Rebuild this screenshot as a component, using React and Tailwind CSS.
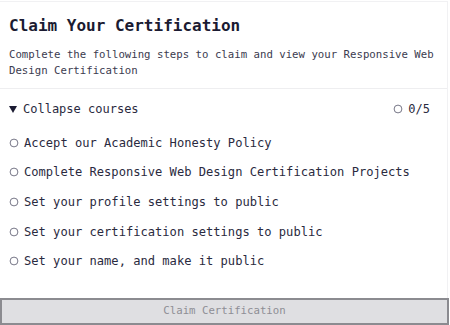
import React from "react";

const steps = [
  "Accept our Academic Honesty Policy",
  "Complete Responsive Web Design Certification Projects",
  "Set your profile settings to public",
  "Set your certification settings to public",
  "Set your name, and make it public",
];

const Circle = () => (
  <svg width="10" height="10" viewBox="0 0 10 10" className="shrink-0">
    <circle cx="5" cy="5" r="3.9" fill="none" stroke="#55556a" strokeWidth="0.8" />
  </svg>
);

const App = () => {
  return (
    <div
      className="w-[450px] h-[325px] bg-white overflow-hidden flex flex-col text-[#1b1b32]"
      style={{ fontFamily: '"DejaVu Sans Mono", "Liberation Mono", monospace' }}
    >
      <div className="flex-1 border-t border-r border-[#f1f1f3] mr-[2px] mt-[1px]">
        <div className="px-[9px] pb-[9px] border-b border-[#eeeef0]">
          <h1 className="pt-[12px] text-[16px] leading-[24px] font-bold">
            Claim Your Certification
          </h1>
          <p className="mt-[9px] text-[10.7px] leading-[16px] text-[#3b3b4f]">
            Complete the following steps to claim and view your Responsive Web
            Design Certification
          </p>
        </div>
        <div className="pl-[9px] pr-[17px]">
          <div className="mt-[10px] h-[20px] flex items-center justify-between text-[12px] text-[#2a2a40]">
            <div className="flex items-center gap-[6px]">
              <svg width="8" height="7" viewBox="0 0 8 7">
                <path d="M0 0 H8 L4 7 Z" fill="#1b1b32" />
              </svg>
              <span>Collapse courses</span>
            </div>
            <div className="flex items-center gap-[5px]">
              <Circle />
              <span>0/5</span>
            </div>
          </div>
          <ul className="mt-[9px]">
            {steps.map((s) => (
              <li key={s} className="h-[29.6px] flex items-center gap-[5px] text-[12.1px] text-[#2a2a40]">
                <Circle />
                <span>{s}</span>
              </li>
            ))}
          </ul>
        </div>
      </div>
      <button
        disabled
        className="h-[27px] w-[449px] border-2 border-[#8b8b90] bg-[#dfdfe2] text-[#8e8e95] text-[10.7px]"
        style={{ fontFamily: '"DejaVu Sans Mono", "Liberation Mono", monospace' }}
      >
        Claim Certification
      </button>
    </div>
  );
};

export default App;
